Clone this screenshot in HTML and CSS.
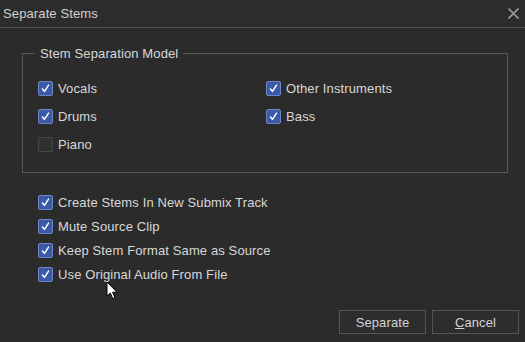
FILE: index.html
```html
<!DOCTYPE html>
<html>
<head>
<meta charset="utf-8">
<link rel="stylesheet" href="styles.css">
</head>
<body>
<div class="dialog">
  <div class="titlebar">
    <span class="title">Separate Stems</span>
    <svg class="close" width="13" height="13" viewBox="0 0 13 13"><path d="M1.5 1.5 L11.5 11.5 M11.5 1.5 L1.5 11.5" stroke="#a0a0a0" stroke-width="1.6" fill="none"/></svg>
  </div>
  <div class="body">
    <fieldset class="group">
      <legend class="legend">Stem Separation Model</legend>
      <div class="grid">
        <label class="opt"><span class="box on"><svg viewBox="0 0 15 15"><path d="M4 8 L6.3 10.8 L11 3.5" stroke="#fff" stroke-width="1.7" fill="none" stroke-linecap="round" stroke-linejoin="round"/></svg></span>Vocals</label>
        <label class="opt"><span class="box on"><svg viewBox="0 0 15 15"><path d="M4 8 L6.3 10.8 L11 3.5" stroke="#fff" stroke-width="1.7" fill="none" stroke-linecap="round" stroke-linejoin="round"/></svg></span>Other Instruments</label>
        <label class="opt"><span class="box on"><svg viewBox="0 0 15 15"><path d="M4 8 L6.3 10.8 L11 3.5" stroke="#fff" stroke-width="1.7" fill="none" stroke-linecap="round" stroke-linejoin="round"/></svg></span>Drums</label>
        <label class="opt"><span class="box on"><svg viewBox="0 0 15 15"><path d="M4 8 L6.3 10.8 L11 3.5" stroke="#fff" stroke-width="1.7" fill="none" stroke-linecap="round" stroke-linejoin="round"/></svg></span>Bass</label>
        <label class="opt"><span class="box"></span>Piano</label>
      </div>
    </fieldset>
    <div class="list">
      <label class="opt"><span class="box on"><svg viewBox="0 0 15 15"><path d="M4 8 L6.3 10.8 L11 3.5" stroke="#fff" stroke-width="1.7" fill="none" stroke-linecap="round" stroke-linejoin="round"/></svg></span>Create Stems In New Submix Track</label>
      <label class="opt"><span class="box on"><svg viewBox="0 0 15 15"><path d="M4 8 L6.3 10.8 L11 3.5" stroke="#fff" stroke-width="1.7" fill="none" stroke-linecap="round" stroke-linejoin="round"/></svg></span>Mute Source Clip</label>
      <label class="opt"><span class="box on"><svg viewBox="0 0 15 15"><path d="M4 8 L6.3 10.8 L11 3.5" stroke="#fff" stroke-width="1.7" fill="none" stroke-linecap="round" stroke-linejoin="round"/></svg></span>Keep Stem Format Same as Source</label>
      <label class="opt"><span class="box on"><svg viewBox="0 0 15 15"><path d="M4 8 L6.3 10.8 L11 3.5" stroke="#fff" stroke-width="1.7" fill="none" stroke-linecap="round" stroke-linejoin="round"/></svg></span>Use Original Audio From File</label>
    </div>
    <div class="footer">
      <button class="btn">Separate</button>
      <button class="btn"><u>C</u>ancel</button>
    </div>
  </div>
  <svg class="cursor" width="13" height="19" viewBox="0 0 13 19"><path d="M1 1 L1 15 L4.3 12 L6.8 17.6 L9 16.6 L6.6 11.2 L11 11.2 Z" fill="#fff" stroke="#000" stroke-width="1" stroke-linejoin="round"/></svg>
</div>
</body>
</html>
```
FILE: styles.css
```css
html, body {
  margin: 0;
  padding: 0;
  background: #2b2b2b;
}
.dialog {
  position: relative;
  width: 525px;
  height: 342px;
  background: #2b2b2b;
  font-family: "Liberation Sans", Arial, sans-serif;
  font-size: 13px;
  letter-spacing: 0.12px;
  color: #d8d8d8;
  display: flex;
  flex-direction: column;
  overflow: hidden;
}
.titlebar {
  height: 27px;
  border-bottom: 1px solid #4e4e4e;
  display: flex;
  align-items: center;
  justify-content: space-between;
  padding: 0 5px 0 3px;
  background: #2c2c2c;
}
.title {
  color: #d0d0d0;
  font-size: 13px;
}
.close {
  display: block;
}
.body {
  flex: 1;
  display: flex;
  flex-direction: column;
  padding: 0 17px 8px 22px;
}
.group {
  margin: 18px 0 0 0;
  padding: 13px 0 14px 15px;
  border: 1px solid #585858;
  min-width: 0;
}
.legend {
  line-height: 15px;
  padding: 0 5px;
  margin-left: -3px;
  color: #d8d8d8;
}
.grid {
  display: grid;
  grid-template-columns: 228px 1fr;
  grid-auto-rows: 28px;
}
.opt {
  display: flex;
  align-items: center;
  gap: 5px;
  white-space: nowrap;
}
.box {
  width: 13px;
  height: 13px;
  border: 1px solid #464646;
  border-radius: 2px;
  background: #303030;
  flex: none;
  display: flex;
}
.box.on {
  background: #3a5aa8;
  border-color: #6f86c2;
}
.box svg {
  width: 13px;
  height: 13px;
}
.list {
  margin-top: 17px;
  padding-left: 16px;
  display: grid;
  grid-auto-rows: 24px;
}
.footer {
  margin-top: auto;
  margin-right: -11px;
  display: flex;
  justify-content: flex-end;
  gap: 6px;
}
.btn {
  width: 87px;
  height: 24px;
  background: #2d2d2d;
  border: 1px solid #555555;
  border-radius: 0;
  color: #d4d4d4;
  font-family: "Liberation Sans", Arial, sans-serif;
  font-size: 13px;
  letter-spacing: 0.12px;
  padding: 0;
}
.cursor {
  position: absolute;
  left: 106px;
  top: 281px;
}
```
